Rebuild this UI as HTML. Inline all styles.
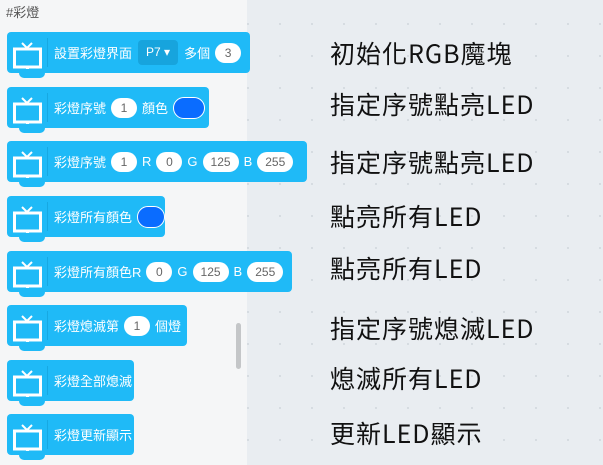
<!DOCTYPE html>
<html><head><meta charset="utf-8"><style>
*{margin:0;padding:0;box-sizing:border-box}
body{width:603px;height:465px;overflow:hidden;position:relative;background:#e9edf1;font-family:"Liberation Sans","Noto Sans CJK TC",sans-serif;
background-image:radial-gradient(circle,#d5dae0 1px,transparent 1.2px);background-size:32px 32px;background-position:8px 8px}
#left{position:absolute;left:0;top:0;width:247px;height:465px;background:#f5f6f7}
.t{position:absolute;left:6px;top:2px;font-size:13px;color:#555}
.b{position:absolute;left:7px;height:41px;background:#1fbaf7;border-radius:4px;color:#fff;font-size:13px;display:flex;align-items:center;padding-left:47px;white-space:nowrap}
.b::after{content:"";position:absolute;left:12px;bottom:-5px;width:26px;height:6px;background:#1fbaf7;border-radius:0 0 5px 5px}
.b::before{content:"";position:absolute;left:40px;top:6px;width:1px;height:29px;background:#17a8e2}
.b svg{position:absolute;left:5px;top:8px}
.p{display:inline-block;background:#fff;color:#666;border-radius:11px;height:20px;line-height:20px;padding:0 8px;margin:0 5px;font-size:12px;min-width:26px;text-align:center}
.d{display:inline-block;background:#17a4dd;border-radius:4px;height:25px;line-height:25px;padding:0 8px;margin:0 6px;font-size:12px}
.c{display:inline-block;width:32px;height:22px;background:#0a6cff;border:1px solid #fff;border-radius:11px;margin-left:5px}
.r{position:absolute;left:330px;font-size:25px;letter-spacing:1px;color:#111;font-family:"Noto Sans CJK TC","Liberation Sans",sans-serif;line-height:1}
.sb{position:absolute;left:236px;top:323px;width:5px;height:46px;background:#c4c6c8;border-radius:3px}
</style></head><body>
<div id="left"></div>
<div class="t">#彩燈</div>
<svg width="0" height="0" style="position:absolute"><defs><g id="tv"><rect x="2.5" y="9" width="26" height="18" fill="none" stroke="#fff" stroke-width="3"/><path d="M10 3l5 5 5-5" fill="none" stroke="#fff" stroke-width="2"/><rect x="14" y="27" width="3" height="2" fill="#fff"/></g></defs></svg>
<div class="b" style="top:32px;width:243px"><svg width="31" height="30"><use href="#tv"/></svg>設置彩燈界面<span class="d">P7 ▾</span>多個<span class="p">3</span></div>
<div class="b" style="top:87px;width:202px"><svg width="31" height="30"><use href="#tv"/></svg>彩燈序號<span class="p">1</span>顏色<span class="c"></span></div>
<div class="b" style="top:141px;width:300px"><svg width="31" height="30"><use href="#tv"/></svg>彩燈序號<span class="p">1</span>R<span class="p">0</span>G<span class="p">125</span>B<span class="p">255</span></div>
<div class="b" style="top:196px;width:158px"><svg width="31" height="30"><use href="#tv"/></svg>彩燈所有顏色<span class="c"></span></div>
<div class="b" style="top:251px;width:285px"><svg width="31" height="30"><use href="#tv"/></svg>彩燈所有顏色R<span class="p">0</span>G<span class="p">125</span>B<span class="p">255</span></div>
<div class="b" style="top:305px;width:180px"><svg width="31" height="30"><use href="#tv"/></svg>彩燈熄滅第<span class="p">1</span>個燈</div>
<div class="b" style="top:360px;width:127px"><svg width="31" height="30"><use href="#tv"/></svg>彩燈全部熄滅</div>
<div class="b" style="top:414px;width:127px"><svg width="31" height="30"><use href="#tv"/></svg>彩燈更新顯示</div>
<div class="sb"></div>
<div class="r" style="top:41px">初始化RGB魔塊</div>
<div class="r" style="top:92px">指定序號點亮LED</div>
<div class="r" style="top:150px">指定序號點亮LED</div>
<div class="r" style="top:204px">點亮所有LED</div>
<div class="r" style="top:256px">點亮所有LED</div>
<div class="r" style="top:316px">指定序號熄滅LED</div>
<div class="r" style="top:366px">熄滅所有LED</div>
<div class="r" style="top:421px">更新LED顯示</div>
</body></html>
